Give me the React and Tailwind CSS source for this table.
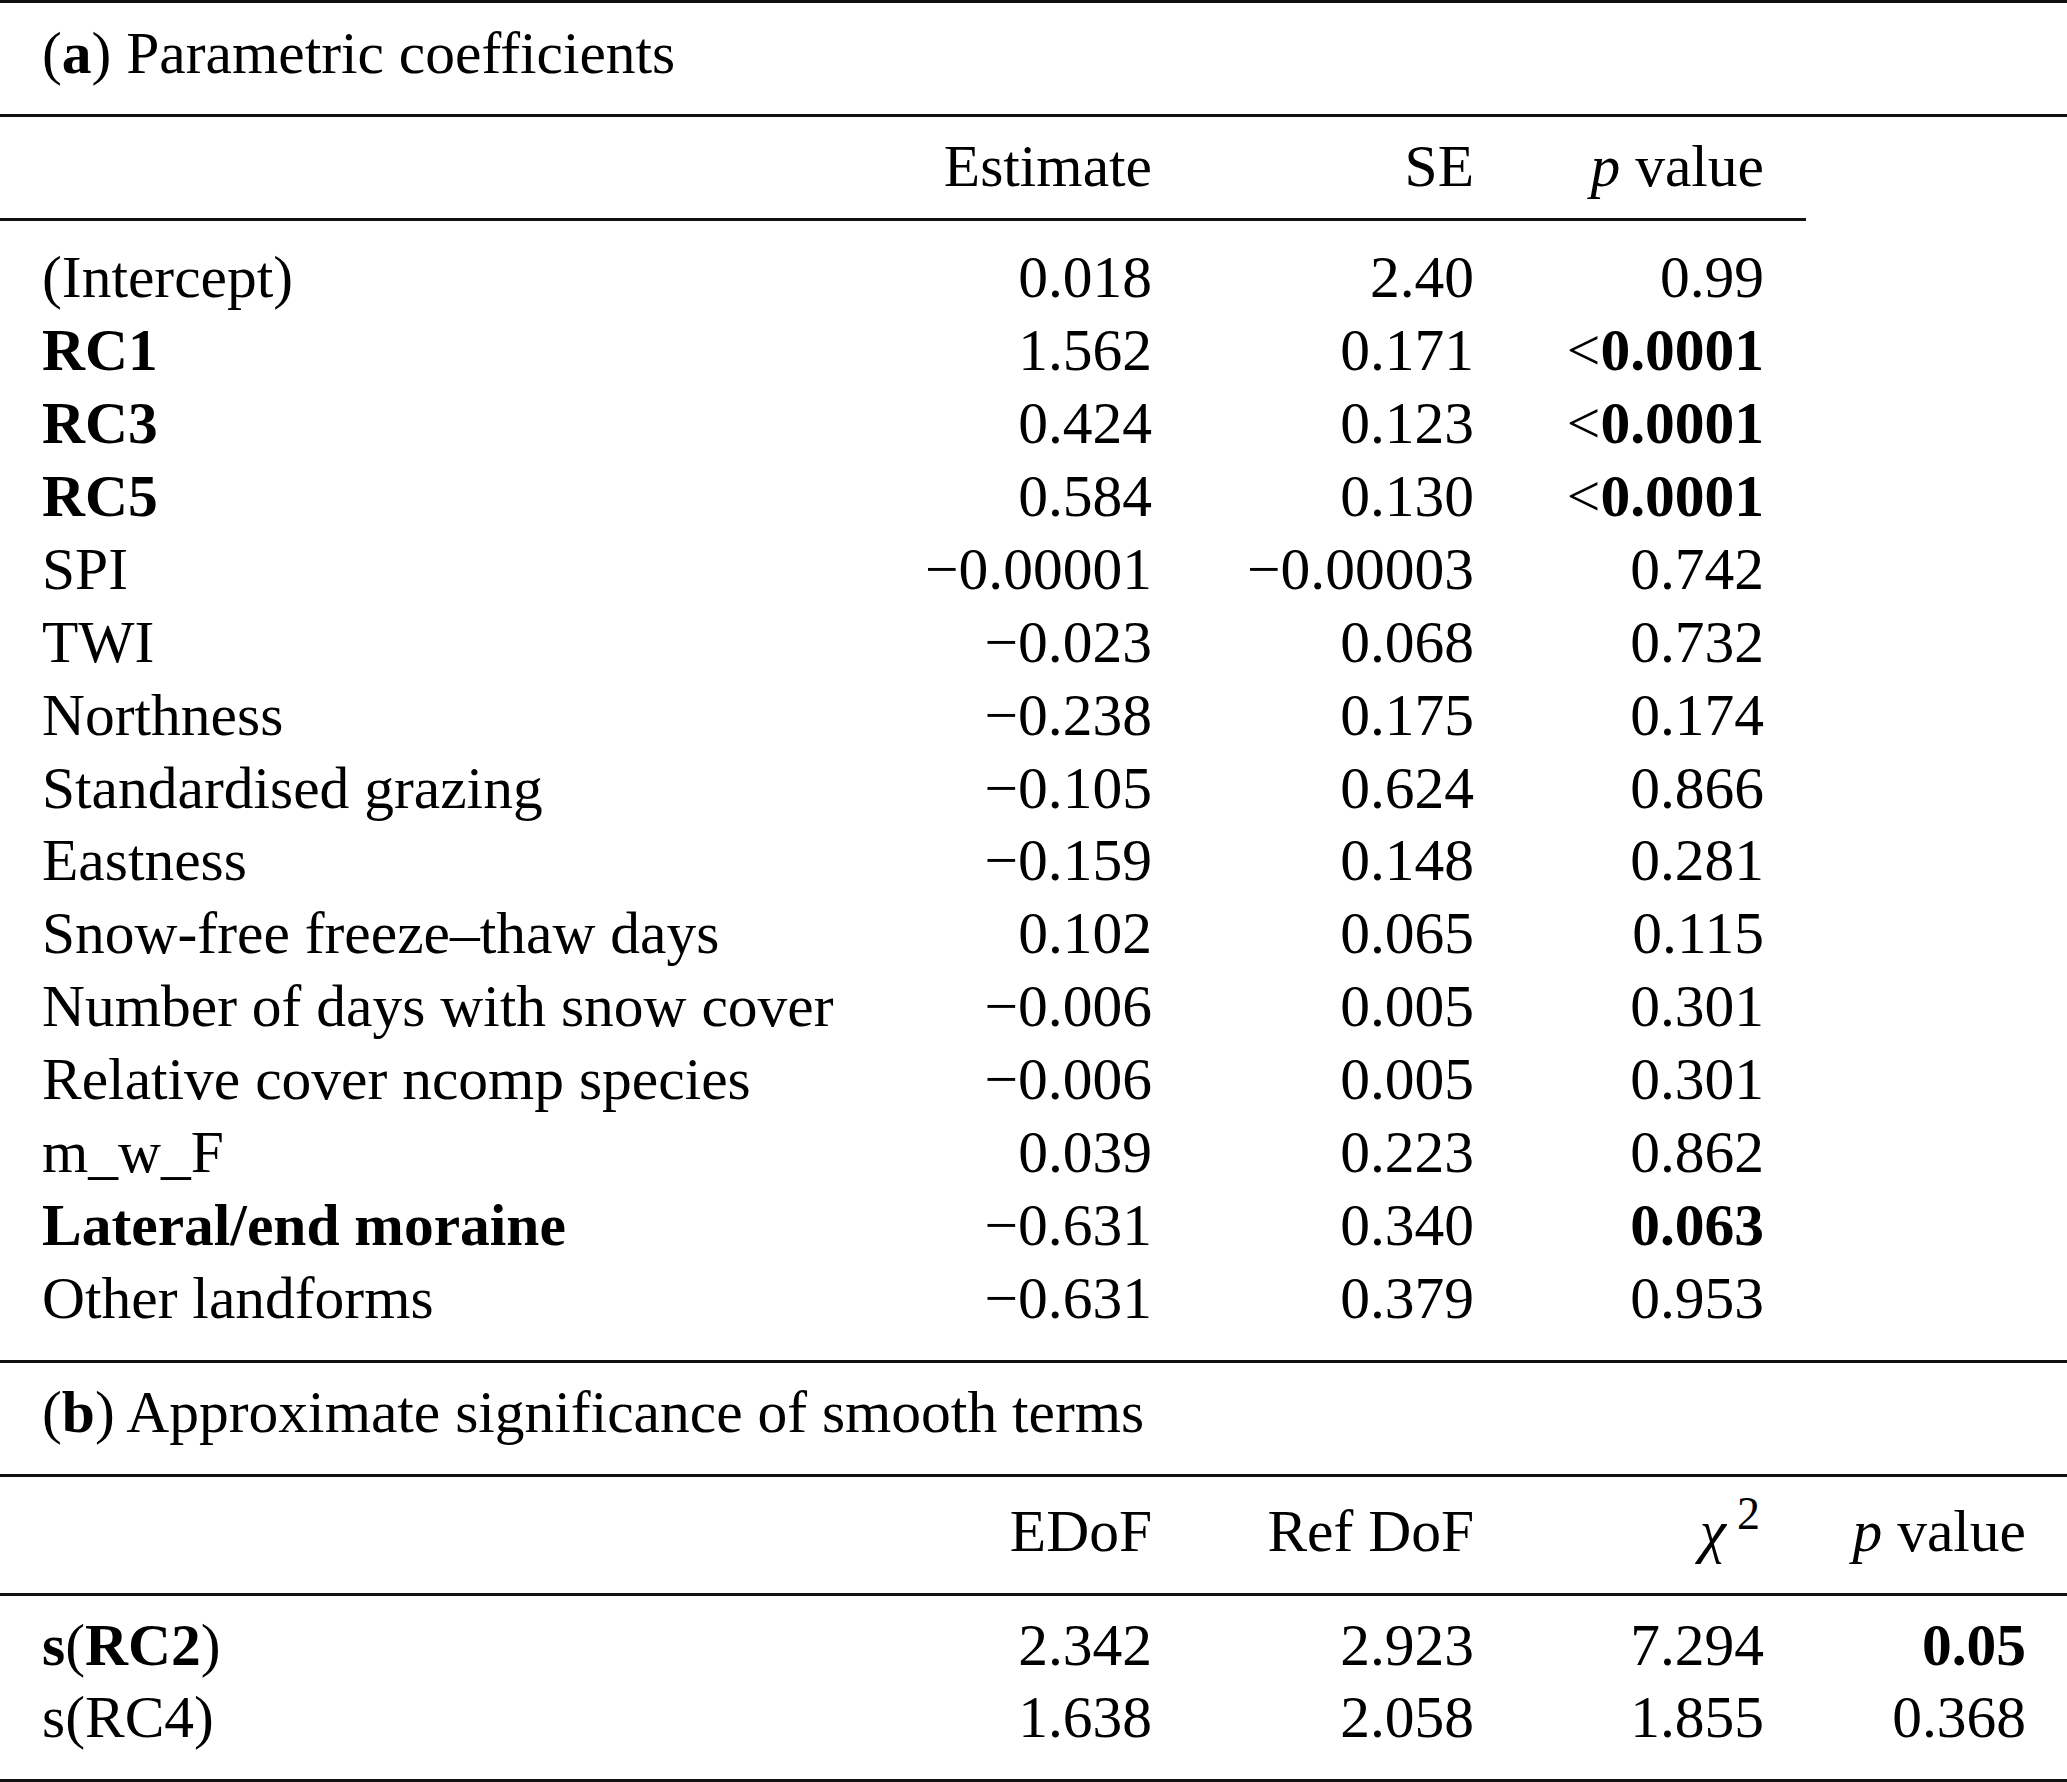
const Rule = () => <div className="h-[3px] bg-[#111]" />;

const Lt = ({ children }) => (
  <>
    <span>&lt;</span>
    <span className="font-bold">{children}</span>
  </>
);

const Bold = ({ children }) => <span className="font-bold">{children}</span>;

// parametric coefficients (part a)
const coefRows = [
  { label: "(Intercept)", est: "0.018", se: "2.40", p: "0.99" },
  { label: <Bold>RC1</Bold>, est: "1.562", se: "0.171", p: <Lt>0.0001</Lt> },
  { label: <Bold>RC3</Bold>, est: "0.424", se: "0.123", p: <Lt>0.0001</Lt> },
  { label: <Bold>RC5</Bold>, est: "0.584", se: "0.130", p: <Lt>0.0001</Lt> },
  { label: "SPI", est: "−0.00001", se: "−0.00003", p: "0.742" },
  { label: "TWI", est: "−0.023", se: "0.068", p: "0.732" },
  { label: "Northness", est: "−0.238", se: "0.175", p: "0.174" },
  { label: "Standardised grazing", est: "−0.105", se: "0.624", p: "0.866" },
  { label: "Eastness", est: "−0.159", se: "0.148", p: "0.281" },
  { label: "Snow-free freeze–thaw days", est: "0.102", se: "0.065", p: "0.115" },
  { label: "Number of days with snow cover", est: "−0.006", se: "0.005", p: "0.301" },
  { label: "Relative cover ncomp species", est: "−0.006", se: "0.005", p: "0.301" },
  { label: "m_w_F", est: "0.039", se: "0.223", p: "0.862" },
  { label: <Bold>Lateral/end moraine</Bold>, est: "−0.631", se: "0.340", p: <Bold>0.063</Bold> },
  { label: "Other landforms", est: "−0.631", se: "0.379", p: "0.953" },
];

// smooth terms (part b)
const smoothRows = [
  {
    label: (
      <>
        <Bold>s</Bold>(<Bold>RC2</Bold>)
      </>
    ),
    edof: "2.342",
    ref: "2.923",
    chi: "7.294",
    p: <Bold>0.05</Bold>,
  },
  { label: "s(RC4)", edof: "1.638", ref: "2.058", chi: "1.855", p: "0.368" },
];

const PValue = () => (
  <>
    <i>p</i> value
  </>
);

const Row = ({ cells, className = "" }) => (
  <div className={`flex pl-[42px] ${className}`}>
    <div className="w-[800px] whitespace-nowrap">{cells[0]}</div>
    <div className="w-[310px] text-right whitespace-nowrap">{cells[1]}</div>
    <div className="w-[322px] text-right whitespace-nowrap">{cells[2]}</div>
    <div className="w-[290px] text-right whitespace-nowrap">{cells[3]}</div>
    {cells.length > 4 && (
      <div className="w-[262px] text-right whitespace-nowrap">{cells[4]}</div>
    )}
  </div>
);

export default function App() {
  return (
    <div className="w-[2067px] h-[1782px] bg-white text-black font-['Liberation_Serif','Times_New_Roman',serif] text-[59.5px] leading-[73px]">
      <Rule />
      <div className="pl-[42px] pt-[14px] pb-[24px]">
        (<Bold>a</Bold>) Parametric coefficients
      </div>
      <Rule />
      <div className="w-[1806px] pt-[13px] pb-[14.5px] border-b-[3px] border-[#111]">
        <Row cells={["", "Estimate", "SE", <PValue />]} />
      </div>
      <div className="pt-[20.7px] pb-[25.5px] leading-[72.9px]">
        {coefRows.map((r, i) => (
          <Row key={i} cells={[r.label, r.est, r.se, r.p]} />
        ))}
      </div>
      <Rule />
      <div className="pl-[42px] pt-[13px] pb-[25px]">
        (<Bold>b</Bold>) Approximate significance of smooth terms
      </div>
      <Rule />
      <div className="pt-[17.7px] pb-[24.6px]">
        <Row
          cells={[
            "",
            "EDoF",
            "Ref DoF",
            <span className="pr-[4px]">
              <i>χ</i>
              <sup className="text-[46px] ml-[11px] relative top-[-22px] align-baseline">2</sup>
            </span>,
            <PValue />,
          ]}
        />
      </div>
      <Rule />
      <div className="pt-[13.4px] pb-[25.6px] leading-[72px]">
        {smoothRows.map((r, i) => (
          <Row key={i} cells={[r.label, r.edof, r.ref, r.chi, r.p]} />
        ))}
      </div>
      <Rule />
    </div>
  );
}
